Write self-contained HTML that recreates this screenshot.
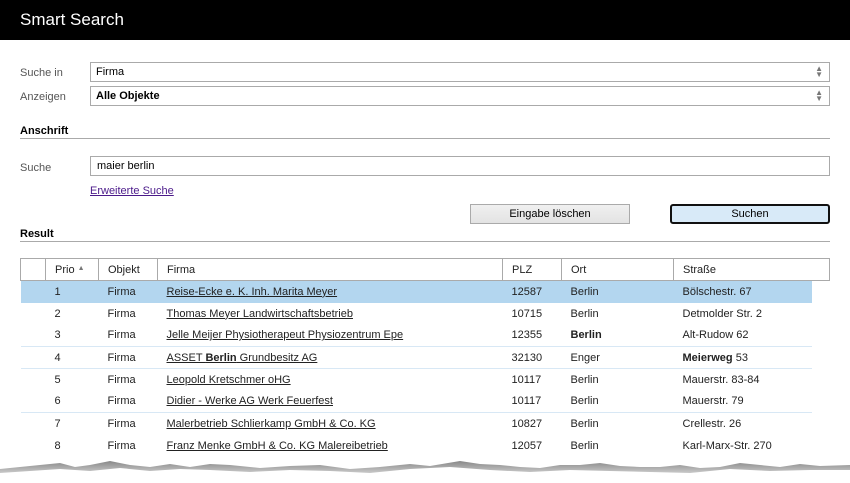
<!DOCTYPE html>
<html><head><meta charset="utf-8"><style>
*{margin:0;padding:0;box-sizing:border-box}
body{width:850px;height:483px;background:#fff;font-family:"Liberation Sans",sans-serif;font-size:11px;color:#222;position:relative;overflow:hidden}
.abs{position:absolute}
.top{left:0;top:0;width:850px;height:40px;background:#000;color:#fff;font-size:17px;padding:10px 0 0 20px}
.lbl{color:#555;font-size:11px}
.box{border:1px solid #aaa;background:#fff;height:20px;padding:3px 0 0 5px;color:#000}
.arr{position:absolute;right:6px;top:3px;font-size:8px;color:#777;line-height:6px}
.hline{height:1px;background:#aaa}
a{color:#4b1a8a}
table{border-collapse:collapse;position:absolute;left:20px;top:258px;width:810px}
th{font-weight:normal;text-align:left;height:22px;border:1px solid #aaa;padding-left:9px;color:#222}
td{height:22px;padding-left:9px;color:#222}
td.e{background:#fff!important;border:none!important;width:18px}
td a{color:#222}
tr.sel td{background:#b3d6ef}
tr.sep td{border-bottom:1px solid #d8e8f5}
</style></head><body>
<div class="abs top">Smart Search</div>
<div class="abs lbl" style="left:20px;top:67px">Suche in</div>
<div class="abs box" style="left:90px;top:62px;width:740px">Firma<div class="arr">▲<br>▼</div></div>
<div class="abs lbl" style="left:20px;top:91px">Anzeigen</div>
<div class="abs box" style="left:90px;top:86px;width:740px;font-weight:bold">Alle Objekte<div class="arr" style="font-weight:normal">▲<br>▼</div></div>
<div class="abs" style="left:20px;top:125px;font-weight:bold;color:#000">Anschrift</div>
<div class="abs hline" style="left:20px;top:138px;width:810px"></div>
<div class="abs lbl" style="left:20px;top:162px">Suche</div>
<div class="abs box" style="left:90px;top:156px;width:740px;padding-left:6px;padding-top:3px">maier berlin</div>
<div class="abs" style="left:90px;top:185px"><a href="#">Erweiterte Suche</a></div>
<div class="abs" style="left:470px;top:204px;width:160px;height:20px;border:1px solid #aaa;background:linear-gradient(#f0f0f0,#e3e3e3);text-align:center;padding-top:3px;color:#000">Eingabe löschen</div>
<div class="abs" style="left:670px;top:204px;width:160px;height:20px;border:2px solid #111;border-radius:3px;background:#d8eaf8;text-align:center;padding-top:2px;color:#000">Suchen</div>
<div class="abs" style="left:20px;top:228px;font-weight:bold;color:#000">Result</div>
<div class="abs hline" style="left:20px;top:241px;width:810px"></div>
<table>
<tr><th style="width:25px"></th><th style="width:53px">Prio <span style="font-size:7px;color:#777;vertical-align:3px">▲</span></th><th style="width:59px">Objekt</th><th style="width:345px">Firma</th><th style="width:59px">PLZ</th><th style="width:112px">Ort</th><th colspan="2">Straße</th></tr>
<tr class="sel"><td></td><td>1</td><td>Firma</td><td><a href="#">Reise-Ecke e. K. Inh. Marita Meyer</a></td><td>12587</td><td>Berlin</td><td>Bölschestr. 67</td><td class="e"></td></tr>
<tr><td></td><td>2</td><td>Firma</td><td><a href="#">Thomas Meyer Landwirtschaftsbetrieb</a></td><td>10715</td><td>Berlin</td><td>Detmolder Str. 2</td><td class="e"></td></tr>
<tr class="sep"><td></td><td>3</td><td>Firma</td><td><a href="#">Jelle Meijer Physiotherapeut Physiozentrum Epe</a></td><td>12355</td><td><b>Berlin</b></td><td>Alt-Rudow 62</td><td class="e"></td></tr>
<tr class="sep"><td></td><td>4</td><td>Firma</td><td><a href="#">ASSET <b>Berlin</b> Grundbesitz AG</a></td><td>32130</td><td>Enger</td><td><b>Meierweg</b> 53</td><td class="e"></td></tr>
<tr><td></td><td>5</td><td>Firma</td><td><a href="#">Leopold Kretschmer oHG</a></td><td>10117</td><td>Berlin</td><td>Mauerstr. 83-84</td><td class="e"></td></tr>
<tr class="sep"><td></td><td>6</td><td>Firma</td><td><a href="#">Didier - Werke AG Werk Feuerfest</a></td><td>10117</td><td>Berlin</td><td>Mauerstr. 79</td><td class="e"></td></tr>
<tr><td></td><td>7</td><td>Firma</td><td><a href="#">Malerbetrieb Schlierkamp GmbH &amp; Co. KG</a></td><td>10827</td><td>Berlin</td><td>Crellestr. 26</td><td class="e"></td></tr>
<tr><td></td><td>8</td><td>Firma</td><td><a href="#">Franz Menke GmbH &amp; Co. KG Malereibetrieb</a></td><td>12057</td><td>Berlin</td><td>Karl-Marx-Str. 270</td><td class="e"></td></tr>
</table>
<svg class="abs" style="left:0;top:455px" width="850" height="28">
<defs><linearGradient id="g" x1="0" y1="0" x2="0" y2="1"><stop offset="0" stop-color="#888"/><stop offset="1" stop-color="#fff"/></linearGradient></defs>
<path d="M0 14 L20 12 L40 10 L60 8 L75 12 L90 10 L110 6 L130 10 L150 12 L170 9 L190 12 L210 9 L230 10 L260 13 L290 11 L320 10 L350 14 L380 12 L410 9 L430 11 L460 6 L480 9 L500 10 L520 12 L540 13 L560 10 L580 10 L600 8 L620 11 L640 12 L660 12 L680 10 L700 13 L720 12 L740 8 L760 10 L780 12 L800 9 L820 11 L850 10 L850 28 L0 28Z" fill="url(#g)"/>
<path d="M0 18 L30 16 L60 14 L90 16 L120 13 L150 16 L180 14 L210 15 L250 17 L290 15 L330 16 L370 18 L410 14 L450 12 L490 15 L530 17 L570 15 L610 16 L650 17 L690 18 L730 14 L770 16 L810 15 L850 15 L850 28 L0 28Z" fill="#fff"/>
</svg>
</body></html>
